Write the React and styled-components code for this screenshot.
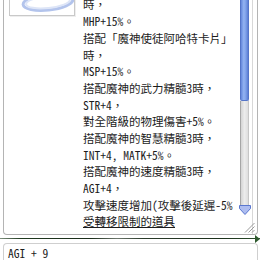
import { useLayoutEffect, useRef } from "react";
import styled, { createGlobalStyle } from "styled-components";

const Global = createGlobalStyle`
  html, body {
    margin: 0;
    padding: 0;
    background: #fff;
    overflow: hidden;
  }
`;

const FONT = `"Noto Sans Mono CJK TC", "Liberation Mono", "Noto Sans CJK TC", monospace`;

const Window = styled.div`
  width: 260px;
  height: 260px;
  display: flex;
  flex-direction: column;
  font-family: ${FONT};
  font-size: 11.5px;
  color: #1c1c1c;
`;

const DescPanel = styled.div`
  height: 235px;
  margin: 0 2px 0 3px;
  display: flex;
  border: 1px solid #b4b4b4;
  border-top: none;
  border-radius: 0 0 4px 4px;
  box-sizing: border-box;
`;

const Viewport = styled.div`
  flex: 1;
  overflow: hidden;
`;

const Content = styled.div`
  display: grid;
  grid-template-columns: 66px 150px;
  column-gap: 8px;
  align-items: start;
  padding: 4px 0 8px 5px;
`;

const ItemPicture = styled.div`
  height: 103px;
  border: 1px solid #c9c9c9;
  box-sizing: border-box;
  display: flex;
  align-items: flex-end;
  justify-content: center;
  box-shadow: 1px 1px 0 #eeeeee;
`;

const Lines = styled.div`
  display: flex;
  flex-direction: column;
  overflow: hidden;
`;

const Line = styled.div`
  height: 16.7px;
  line-height: 16.7px;
  white-space: nowrap;
  text-decoration: ${(p) => (p.$link ? "underline" : "none")};
`;

const ScrollColumn = styled.div`
  width: 9px;
  margin-right: 4px;
  display: flex;
  flex-direction: column;
  border-right: 1px solid #d8d8d8;
  padding-right: 3px;
  background: #fff;
`;

const Thumb = styled.div`
  height: 100px;
  border: 1px solid #5575c8;
  border-top: none;
  border-radius: 0 0 2px 2px;
  background: linear-gradient(90deg, #6487dc 0%, #93b3f2 40%, #7d9fe8 70%, #5a7dd4 100%);
`;

const Track = styled.div`
  height: 104px;
  border-left: 1px solid #a6a6a6;
  border-right: 1px solid #c6c6c6;
  background: linear-gradient(90deg, #d4d4d4, #ececec 50%, #dedede);
`;

const ArrowButton = styled.svg`
  display: block;
  width: 12px;
  height: 10px;
  margin-left: -1px;
`;

const GripArea = styled.div`
  flex: 1;
  display: flex;
  align-items: flex-end;
  justify-content: flex-end;
  padding-bottom: 1px;
  margin-right: -6px;
`;

const Splitter = styled.div`
  position: relative;
  height: 2px;
  margin-top: 3px;
  background: linear-gradient(90deg, #7f907f 0%, #203a20 8%, #1a2c1a 35%, #6d776d 45%, #2a3a2a 55%, #1c301c 85%, #2b4f2b 100%);
`;

const SplitterKnob = styled.span`
  position: absolute;
  right: 0;
  top: -3px;
  width: 0;
  height: 0;
  border-top: 4px solid transparent;
  border-bottom: 4px solid transparent;
  border-left: 5px solid #2e5a2e;
`;

const InputBox = styled.div`
  margin: 4px 2px 0 3px;
  flex: 1;
  border: 1px solid #cfcfcf;
  border-bottom: none;
  border-radius: 4px 4px 0 0;
  padding: 2px 0 0 4px;
  line-height: 14px;
  white-space: nowrap;
`;

const hidden = [
  "敏捷度 + 9",
  "有一定機率讓敵人",
  "陷入暈眩狀態。",
  "搭配「魔神使徒阿哈特卡片」",
  "時，",
];

const lines = [
  "時，",
  "MHP+15%。",
  "搭配「魔神使徒阿哈特卡片」",
  "時，",
  "MSP+15%。",
  "搭配魔神的武力精髓3時，",
  "STR+4，",
  "對全階級的物理傷害+5%。",
  "搭配魔神的智慧精髓3時，",
  "INT+4, MATK+5%。",
  "搭配魔神的速度精髓3時，",
  "AGI+4，",
  "攻擊速度增加(攻擊後延遲-5%)。",
];

export default function App() {
  const viewRef = useRef(null);

  useLayoutEffect(() => {
    if (viewRef.current) viewRef.current.scrollTop = 91;
  }, []);

  return (
    <Window>
      <Global />
      <DescPanel>
        <Viewport ref={viewRef}>
          <Content>
            <ItemPicture>
              <svg width="64" height="101" viewBox="0 0 64 101">
                <ellipse
                  cx="38"
                  cy="88"
                  rx="25"
                  ry="8"
                  fill="none"
                  stroke="#b3c4ec"
                  strokeWidth="3"
                  transform="rotate(-6 38 88)"
                />
                <ellipse
                  cx="38"
                  cy="88"
                  rx="22"
                  ry="6"
                  fill="none"
                  stroke="#dde5f7"
                  strokeWidth="2"
                  transform="rotate(-6 38 88)"
                />
              </svg>
            </ItemPicture>
            <Lines>
              {hidden.map((t, i) => (
                <Line key={"h" + i}>{t}</Line>
              ))}
              {lines.map((t, i) => (
                <Line key={i}>{t}</Line>
              ))}
              <Line $link>受轉移限制的道具</Line>
            </Lines>
          </Content>
        </Viewport>
        <ScrollColumn>
          <Thumb />
          <Track />
          <ArrowButton viewBox="0 0 12 10">
            <polygon
              points="0.5,0.5 11.5,0.5 11.5,3.5 6,9.5 0.5,3.5"
              fill="#aebdf0"
              stroke="#5a77cf"
              strokeWidth="1"
            />
          </ArrowButton>
          <GripArea>
            <svg width="11" height="11" viewBox="0 0 11 11">
              <g stroke="#9a9a9a" strokeWidth="1">
                <line x1="10.5" y1="1" x2="1" y2="10.5" />
                <line x1="10.5" y1="4.5" x2="4.5" y2="10.5" />
                <line x1="10.5" y1="8" x2="8" y2="10.5" />
              </g>
            </svg>
          </GripArea>
        </ScrollColumn>
      </DescPanel>
      <Splitter>
        <SplitterKnob />
      </Splitter>
      <InputBox>AGI + 9</InputBox>
    </Window>
  );
}
